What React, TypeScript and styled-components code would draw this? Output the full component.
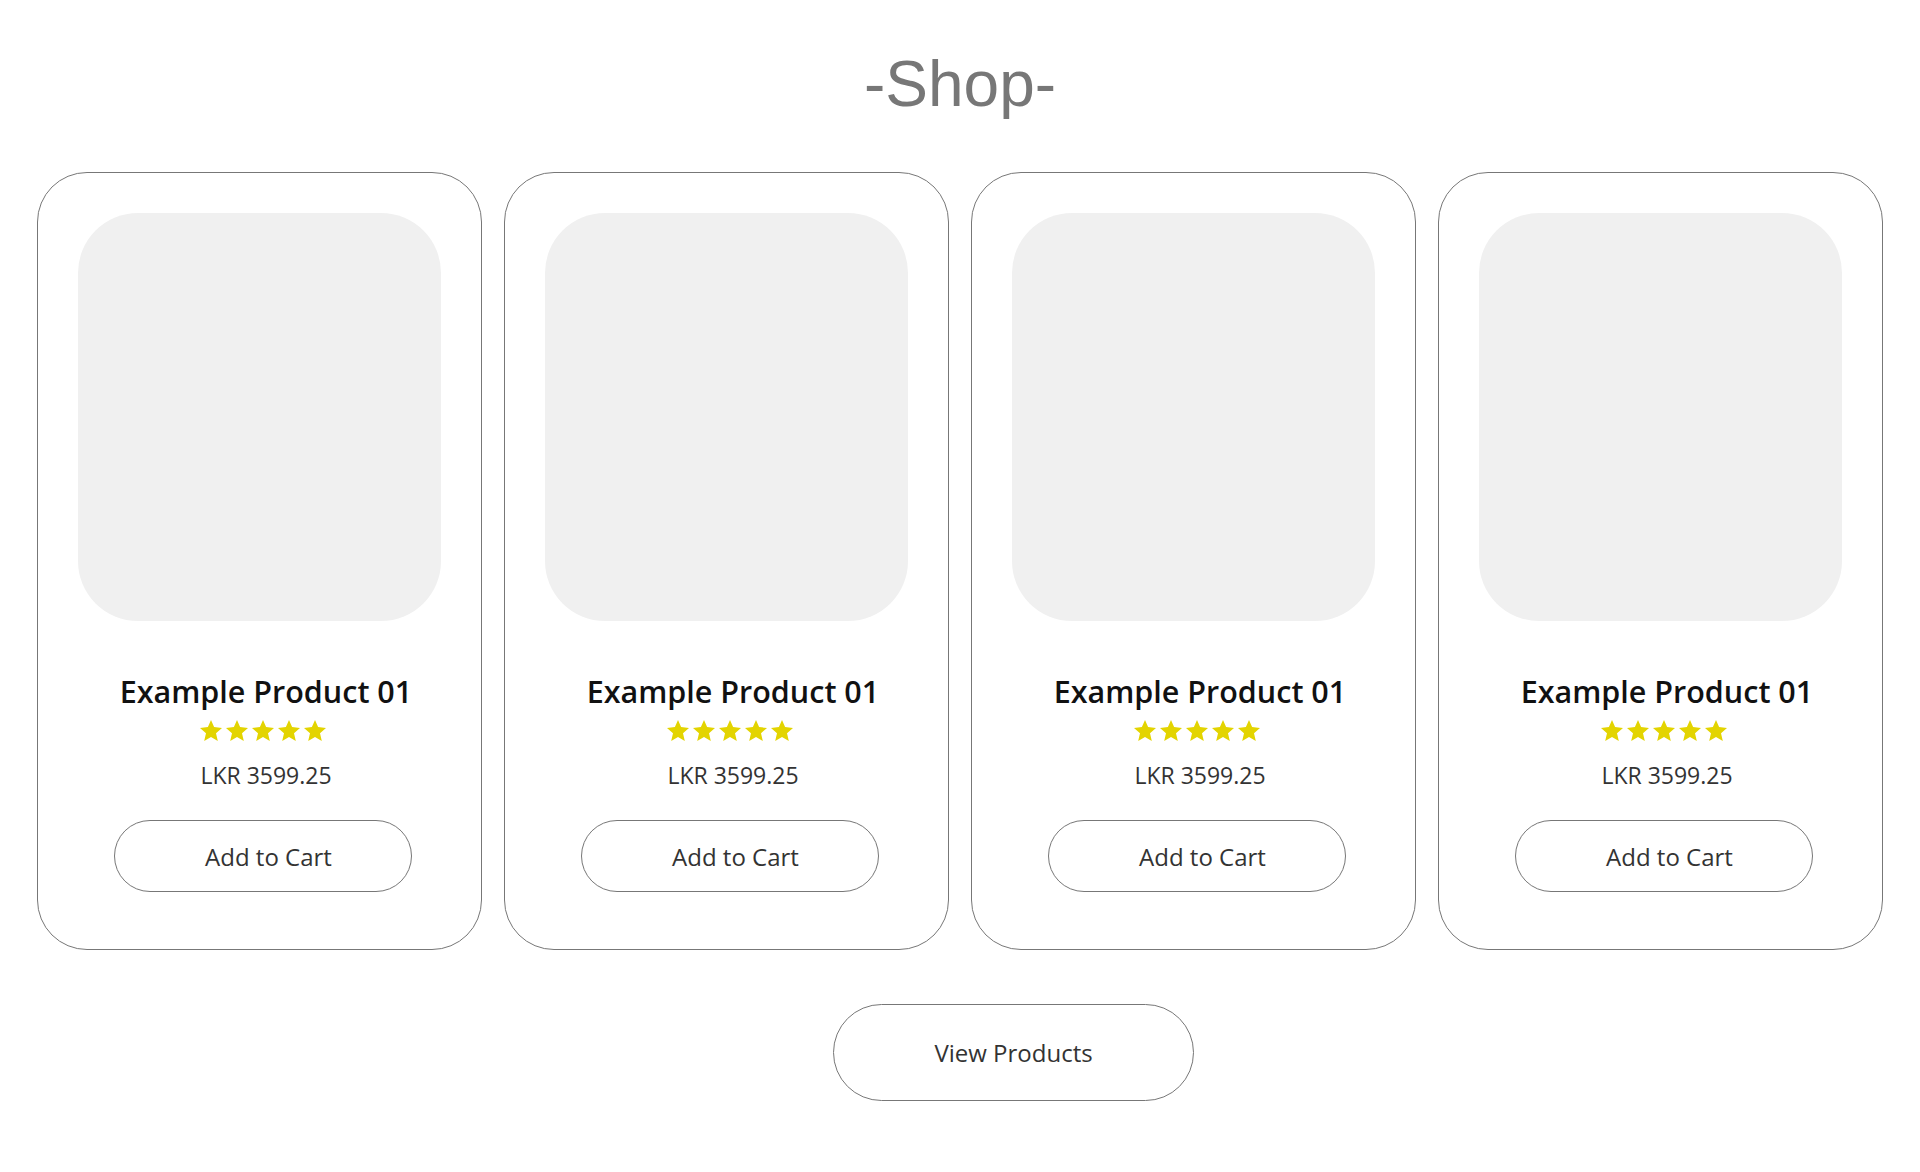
import React from "react";
import styled, { createGlobalStyle } from "styled-components";

const Global = createGlobalStyle`
  html, body { margin: 0; padding: 0; background: #ffffff; }
  body { font-family: "Open Sans", "Noto Sans", sans-serif; }
  * { box-sizing: border-box; }
`;

const Page = styled.main`
  display: flex;
  flex-direction: column;
  align-items: stretch;
  padding: 52px 37px 60px;
`;

const Heading = styled.h1`
  margin: 0;
  text-align: center;
  font-family: "Liberation Sans", Arial, sans-serif;
  font-weight: 400;
  font-size: 64px;
  line-height: 64px;
  color: #777777;
`;

const Grid = styled.section`
  margin-top: 56px;
  display: grid;
  grid-template-columns: repeat(4, 1fr);
  gap: 22px;
`;

const Card = styled.article`
  border: 1px solid #777777;
  border-radius: 50px;
  padding: 40px 40px 57px;
  display: flex;
  flex-direction: column;
  align-items: center;
`;

const ImageBox = styled.div`
  width: 100%;
  height: 408px;
  border-radius: 60px;
  background: #f0f0f0;
`;

const Info = styled.div`
  display: flex;
  flex-direction: column;
  align-items: center;
  padding-left: 7px;
`;

const Title = styled.h2`
  margin: 50px 0 0 6px;
  font-size: 30.5px;
  line-height: 40px;
  font-weight: 600;
  color: #111111;
  white-space: nowrap;
`;

const Stars = styled.div`
  margin-top: 9px;
  display: flex;
  gap: 4px;
  height: 21px;
`;

const Price = styled.p`
  margin: 19px 0 0 6px;
  font-size: 23px;
  line-height: 30px;
  color: #333333;
`;

const Button = styled.button<{ $w: number; $h: number }>`
  width: ${(p) => p.$w}px;
  height: ${(p) => p.$h}px;
  border: 1px solid #777777;
  border-radius: ${(p) => p.$h / 2}px;
  background: #ffffff;
  color: #333333;
  font-family: "Open Sans", "Noto Sans", sans-serif;
  font-size: 24px;
  cursor: pointer;
  padding: 0;
`;

const CardButton = styled(Button)`
  margin-top: 30px;
  margin-left: 7px;
  padding-left: 11px;
`;

const Footer = styled.div`
  margin-top: 54px;
  display: flex;
  justify-content: center;
  padding-left: 107px;
`;

const Star = () => (
  <svg width="22" height="21" viewBox="1 1 22 21">
    <polygon
      points="12,1 15.1,8.1 23,8.9 17,14.2 18.8,22 12,18 5.2,22 7,14.2 1,8.9 8.9,8.1"
      fill="#e3d400"
    />
  </svg>
);

const ProductCard = () => (
  <Card>
    <ImageBox />
    <Info>
      <Title>Example Product 01</Title>
      <Stars>
        {[0, 1, 2, 3, 4].map((i) => (
          <Star key={i} />
        ))}
      </Stars>
      <Price>LKR 3599.25</Price>
    </Info>
    <CardButton $w={298} $h={72}>Add to Cart</CardButton>
  </Card>
);

export default function App() {
  return (
    <>
      <Global />
      <Page>
        <Heading>-Shop-</Heading>
        <Grid>
          {[0, 1, 2, 3].map((i) => (
            <ProductCard key={i} />
          ))}
        </Grid>
        <Footer>
          <Button $w={361} $h={97}>View Products</Button>
        </Footer>
      </Page>
    </>
  );
}
